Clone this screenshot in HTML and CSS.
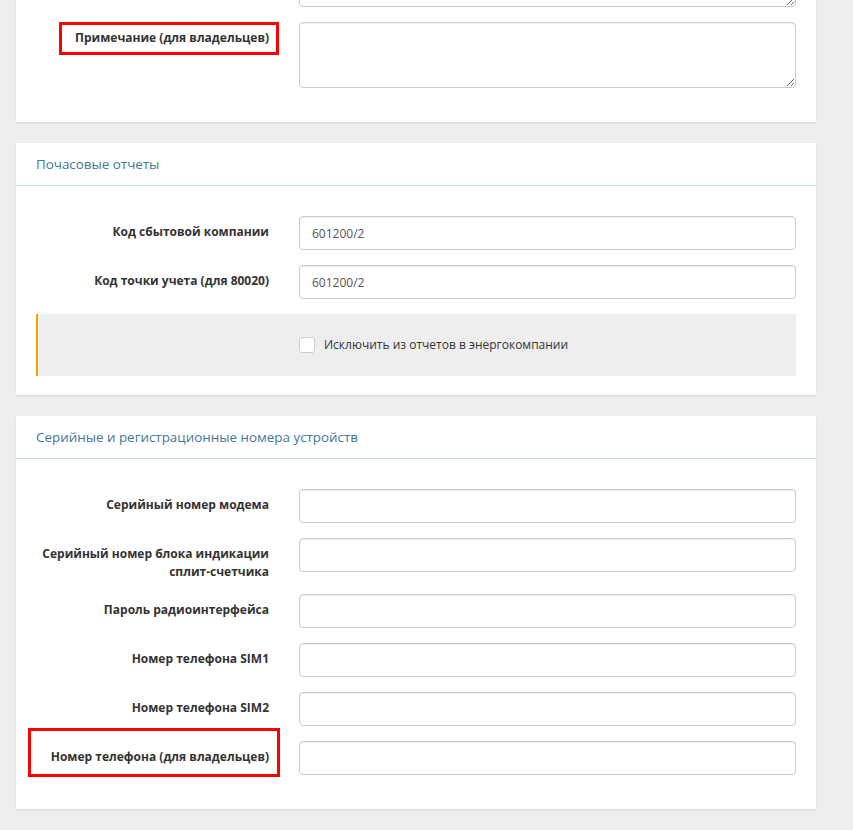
FILE: index.html
```html
<!DOCTYPE html>
<html lang="ru">
<head>
<meta charset="utf-8">
<title>Форма</title>
<link rel="stylesheet" href="styles.css">
</head>
<body>
<div class="page">
  <section class="card card-first">
    <div class="card-body">
      <div class="row">
        <label class="lbl"></label>
        <textarea class="field area"></textarea>
      </div>
      <div class="row">
        <label class="lbl hl-wrap">Примечание (для владельцев)<span class="hl hl-1"></span></label>
        <textarea class="field area"></textarea>
      </div>
    </div>
  </section>

  <section class="card">
    <header class="card-head">Почасовые отчеты</header>
    <div class="card-body">
      <div class="row">
        <label class="lbl">Код сбытовой компании</label>
        <input class="field" type="text" value="601200/2">
      </div>
      <div class="row">
        <label class="lbl">Код точки учета (для 80020)</label>
        <input class="field" type="text" value="601200/2">
      </div>
      <div class="notice">
        <span></span>
        <div class="check">
          <span class="box"></span>
          <span class="check-text">Исключить из отчетов в энергокомпании</span>
        </div>
      </div>
    </div>
  </section>

  <section class="card">
    <header class="card-head">Серийные и регистрационные номера устройств</header>
    <div class="card-body">
      <div class="row">
        <label class="lbl">Серийный номер модема</label>
        <input class="field" type="text">
      </div>
      <div class="row row-tall">
        <label class="lbl">Серийный номер блока индикации сплит-счетчика</label>
        <input class="field" type="text">
      </div>
      <div class="row">
        <label class="lbl">Пароль радиоинтерфейса</label>
        <input class="field" type="text">
      </div>
      <div class="row">
        <label class="lbl">Номер телефона SIM1</label>
        <input class="field" type="text">
      </div>
      <div class="row">
        <label class="lbl">Номер телефона SIM2</label>
        <input class="field" type="text">
      </div>
      <div class="row">
        <label class="lbl hl-wrap">Номер телефона (для владельцев)<span class="hl hl-2"></span></label>
        <input class="field" type="text">
      </div>
    </div>
  </section>
</div>
</body>
</html>
```

FILE: styles.css
```css
html, body {
  margin: 0;
  padding: 0;
  background: #eeeeee;
  font-family: "Open Sans", "Noto Sans", "Liberation Sans", sans-serif;
  font-size: 12px;
  color: #333;
  overflow: hidden;
}

.page {
  width: 800px;
  margin-left: 16px;
}

.card {
  background: #fff;
  box-shadow: 0 1px 2px rgba(0, 0, 0, 0.1);
  margin-bottom: 21px;
}

.card-first {
  margin-top: -89px;
}

.card-first .card-body {
  padding-top: 30px;
}

.card-head {
  padding: 12px 20px;
  line-height: 18px;
  font-size: 13.4px;
  color: #3f7797;
  border-bottom: 1px solid #c3dce3;
}

.card-body {
  padding: 30px 20px 19px 20px;
}

.row {
  display: grid;
  grid-template-columns: 233px 497px;
  column-gap: 30px;
  align-items: start;
  margin-bottom: 15px;
}

.row-tall {
  margin-bottom: 13px;
}

.lbl {
  text-align: right;
  font-weight: 700;
  line-height: 18px;
  padding-top: 7px;
  color: #333;
}

.hl-wrap {
  position: relative;
}

.hl {
  position: absolute;
  border: 3px solid #f00;
  box-sizing: border-box;
  pointer-events: none;
}

.hl-1 {
  top: 0;
  right: -10px;
  width: 220px;
  height: 33px;
}

.hl-2 {
  top: -13px;
  right: -11px;
  width: 252px;
  height: 49px;
}

.field {
  box-sizing: border-box;
  display: block;
  width: 497px;
  height: 34px;
  margin: 0;
  padding: 6px 12px;
  border: 1px solid #ccc;
  border-radius: 4px;
  box-shadow: inset 0 1px 1px rgba(0, 0, 0, 0.075);
  font-family: "Open Sans", "Noto Sans", "Liberation Sans", sans-serif;
  font-size: 12px;
  color: #555;
  background: #fff;
  outline: none;
}

.area {
  height: 66px;
  resize: vertical;
}

.notice {
  display: grid;
  grid-template-columns: 231px 497px;
  column-gap: 30px;
  align-items: center;
  height: 62px;
  background: #eeeeee;
  border-left: 2px solid #f5a300;
}

.check {
  display: flex;
  align-items: center;
  gap: 9px;
}

.box {
  box-sizing: border-box;
  width: 16px;
  height: 16px;
  background: #fff;
  border: 1px solid #ccc;
  border-radius: 3px;
}

.check-text {
  color: #333;
  font-size: 12px;
  line-height: 18px;
}
```
